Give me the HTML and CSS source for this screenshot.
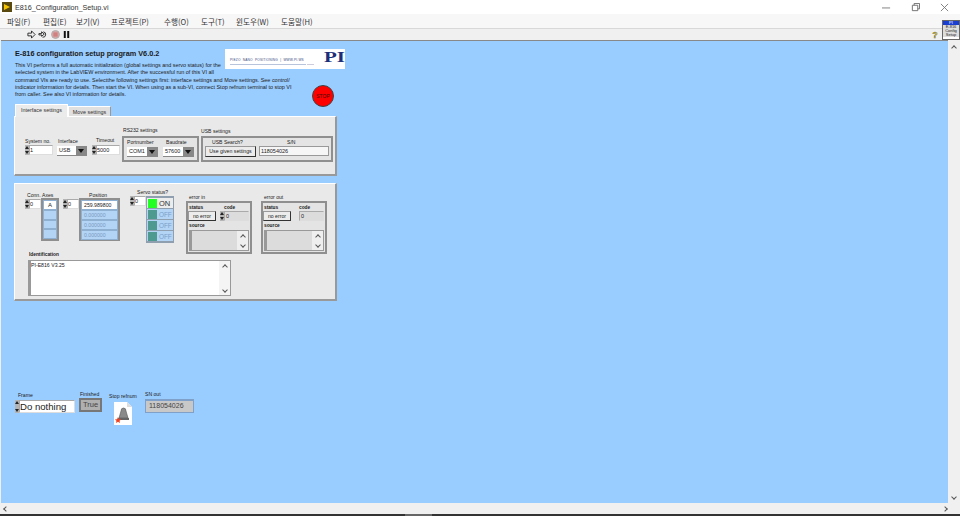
FILE: index.html

```html
<!DOCTYPE html>
<html lang="ko">
<head>
  <meta charset="UTF-8">
  <title>E816_Configuration_Setup.vi</title>
  <meta name="viewport" content="width=device-width, initial-scale=1.0">
  <link rel="stylesheet" href="styles.css">
</head>
<body>
  <div class="window">
    <div class="titlebar">
      <svg class="app-icon" viewBox="0 0 10 10"><rect width="10" height="10" fill="#5a4a10"/><path d="M2 2 L8 5 L2 8 Z" fill="#f5c400"/></svg>
      <span class="title">E816_Configuration_Setup.vi</span>
      <div class="win-btns">
        <svg viewBox="0 0 10 10"><path d="M0 5.5 H9" stroke="#777" fill="none"/></svg>
        <svg viewBox="0 0 10 10"><path d="M1.5 2.5 H7.5 V8.5 H1.5 Z M3.5 2.5 V0.5 H9.5 V6.5 H7.5" stroke="#666" fill="none"/></svg>
        <svg viewBox="0 0 10 10"><path d="M1 1 L9 9 M9 1 L1 9" stroke="#777" fill="none"/></svg>
      </div>
    </div>
    <div class="menubar">
      <span class="m1">파일(F)</span>
      <span class="m2">편집(E)</span>
      <span class="m3">보기(V)</span>
      <span class="m4">프로젝트(P)</span>
      <span class="m5">수행(O)</span>
      <span class="m6">도구(T)</span>
      <span class="m7">윈도우(W)</span>
      <span class="m8">도움말(H)</span>
    </div>
    <div class="toolbar">
      <svg class="tool" viewBox="0 0 10 10"><path d="M1 3.5 H5 V1 L9 5 L5 9 V6.5 H1 Z" fill="#eee" stroke="#222"/></svg>
      <svg class="tool" viewBox="0 0 10 10"><path d="M1 4 H4 V2 L7 4.5 L4 7 V5.5 H1 Z M6 2 A3 3 0 1 1 5 8" fill="none" stroke="#222"/></svg>
      <svg class="tool tool-wide" viewBox="0 0 10 10"><circle cx="5" cy="5" r="4.4" fill="#d9a8a8" stroke="#aaa"/><rect x="2.6" y="2.6" width="4.8" height="4.8" fill="#d08080"/></svg>
      <svg class="tool" viewBox="0 0 10 10"><path d="M2 1 H4.2 V9 H2 Z M5.8 1 H8 V9 H5.8 Z" fill="#111"/></svg>
      <svg class="help" viewBox="0 0 10 12"><text x="5" y="10.5" text-anchor="middle" class="help-mark">?</text></svg>
    </div>
    <div class="vi-icon">
      <div class="vi-top">PI</div>
      <div class="vi-text">E-816<br>Config<br>Setup</div>
    </div>

    <div class="middle">
      <div class="canvas">
        <h1 class="heading">E-816 configuration setup program V6.0.2</h1>
        <p class="descr">This VI performs a full automatic initialization (global settings and servo status) for the<br>selected system in the LabVIEW environment. After the successful run of this VI all<br>command VIs are ready to use. Selectthe following settings first: interface settings and Move settings. See control/<br>indicator information for details. Then start the VI. When using as a sub-VI, connect Stop refnum terminal to stop VI<br>from caller.  See also VI information for details.</p>

        <div class="logo">
          <span class="logo-line">PIEZO &nbsp;NANO &nbsp;POSITIONING &nbsp;| &nbsp;WWW.PI.WS</span>
          <span class="logo-rule"></span>
          <span class="logo-cross"></span>
          <span class="logo-pi">PI</span>
        </div>
        <div class="stop-btn">STOP</div>

        <div class="tab tab-on">Interface settings</div>
        <div class="tab tab-off">Move settings</div>

        <div class="panel panel-tabs">
          <span class="lbl l-sys">System no.</span>
          <div class="num n-sys"><i class="spin"></i><span class="field">1</span></div>
          <span class="lbl l-if">Interface</span>
          <div class="ring r-if"><span>USB</span><b></b></div>
          <span class="lbl l-time">Timeout</span>
          <div class="num n-time"><i class="spin"></i><span class="field">5000</span></div>

          <span class="lbl l-rs">RS232 settings</span>
          <div class="cluster c-rs">
            <span class="lbl l-port">Portnumber</span>
            <span class="lbl l-baud">Baudrate</span>
            <div class="ring r-port"><span>COM1</span><b></b></div>
            <div class="ring r-baud"><span>57600</span><b></b></div>
          </div>

          <span class="lbl l-usb">USB settings</span>
          <div class="cluster c-usb">
            <span class="lbl l-search">USB Search?</span>
            <span class="lbl l-sn">S/N</span>
            <div class="btn b-given">Use given settings</div>
            <div class="sn-field">118054026</div>
          </div>
        </div>

        <div class="panel panel-status">
          <span class="lbl l-conn">Conn.</span>
          <span class="lbl l-axes">Axes</span>
          <div class="num n-axes"><i class="spin"></i><span class="field">0</span></div>
          <div class="arr a-axes">
            <span class="cell on">A</span>
            <span class="cell"></span>
            <span class="cell"></span>
            <span class="cell"></span>
          </div>

          <span class="lbl l-pos">Position</span>
          <div class="num n-pos"><i class="spin"></i><span class="field">0</span></div>
          <div class="arr a-pos">
            <span class="cell on">259.989800</span>
            <span class="cell">0.000000</span>
            <span class="cell">0.000000</span>
            <span class="cell">0.000000</span>
          </div>

          <span class="lbl l-servo">Servo status?</span>
          <div class="num n-servo"><i class="spin"></i><span class="field">0</span></div>
          <div class="leds">
            <div class="led-row"><i class="led lit"></i><span class="led-on">ON</span></div>
            <div class="led-row"><i class="led"></i><span>OFF</span></div>
            <div class="led-row"><i class="led"></i><span>OFF</span></div>
            <div class="led-row"><i class="led"></i><span>OFF</span></div>
          </div>

          <span class="lbl l-err-in">error in</span>
          <div class="cluster err err-in">
            <span class="lbl e-status">status</span>
            <span class="lbl e-code">code</span>
            <div class="btn e-btn">no error</div>
            <div class="num e-num"><i class="spin"></i><span class="field grey">0</span></div>
            <span class="lbl e-source">source</span>
            <div class="src"><span class="bar"><i class="chev up"></i><i class="chev down"></i></span></div>
          </div>

          <span class="lbl l-err-out">error out</span>
          <div class="cluster err err-out">
            <span class="lbl e-status">status</span>
            <span class="lbl e-code">code</span>
            <div class="btn e-btn">no error</div>
            <div class="num e-num e-ind"><span class="field grey">0</span></div>
            <span class="lbl e-source">source</span>
            <div class="src"><span class="bar"><i class="chev up"></i><i class="chev down"></i></span></div>
          </div>

          <span class="lbl l-id">Identification</span>
          <div class="id-box">
            <span class="id-text">PI-E816 V3.25</span>
            <span class="bar bar-white"><i class="chev up"></i><i class="chev down"></i></span>
          </div>
        </div>

        <span class="lbl l-frame">Frame</span>
        <div class="num n-frame"><i class="spin"></i><span class="field">Do nothing</span></div>
        <span class="lbl l-fin">Finished</span>
        <div class="fin">True</div>
        <span class="lbl l-ref">Stop refnum</span>
        <svg class="ref-icon" viewBox="0 0 18 23">
          <path d="M0 0 H13 L18 5 V23 H0 Z" fill="#fff"/>
          <path d="M13 0 V5 H18" fill="#ddd"/>
          <path d="M7 9 Q7 6 9.5 6 Q12 6 12 9 L14 16 H5 Z" fill="#8a8a8a" stroke="#555" stroke-width=".6"/>
          <rect x="4" y="16" width="11" height="2" fill="#666"/>
          <path d="M4 15 L5 17.2 L7.2 17.4 L5.5 18.8 L6.1 21 L4 19.8 L1.9 21 L2.5 18.8 L.8 17.4 L3 17.2 Z" fill="#f04020"/>
        </svg>
        <span class="lbl l-snout">SN out</span>
        <div class="sn-out">118054026</div>
      </div>
      <div class="vscroll">
        <i class="chev up"></i>
        <i class="chev down"></i>
      </div>
    </div>

    <div class="hscroll">
      <i class="chev left"></i>
      <i class="chev right"></i>
    </div>
    <div class="taskline"><span></span></div>
  </div>
</body>
</html>
```

FILE: styles.css

```css
* { box-sizing: border-box; }
html, body { margin: 0; padding: 0; }
body { font-family: "Liberation Sans", Arial, sans-serif; background: #f0f0f0; color: #222; }
.window { width: 960px; height: 516px; position: relative; display: flex; flex-direction: column; overflow: hidden; }

/* window chrome */
.titlebar { height: 14px; background: #fff; display: flex; align-items: center; padding-left: 2px; flex: none; }
.app-icon { width: 10px; height: 10px; }
.title { margin-left: 3px; font-size: 7.2px; color: #333; }
.win-btns { margin-left: auto; display: flex; gap: 20px; padding-right: 11px; }
.win-btns svg { width: 9px; height: 9px; }
.menubar { height: 15px; background: #f7f7f7; position: relative; font-family: "Noto Sans CJK KR", "Liberation Sans", sans-serif; font-size: 7.6px; color: #333; flex: none; border-bottom: 1px solid #d8d8d8; }
.menubar span { position: absolute; top: 1px; line-height: 13px; white-space: nowrap; }
.m1 { left: 7px; } .m2 { left: 43px; } .m3 { left: 76px; } .m4 { left: 111px; }
.m5 { left: 164px; } .m6 { left: 201px; } .m7 { left: 236px; } .m8 { left: 281px; }
.toolbar { height: 11px; background: #f0f0f0; display: flex; align-items: center; padding-left: 27px; gap: 2px; flex: none; position: relative; }
.tool { width: 9px; height: 9px; }
.tool-wide { margin-left: 2px; }
.help { position: absolute; left: 931px; top: 0; width: 8px; height: 11px; }
.help-mark { font: bold 11px "Liberation Sans", sans-serif; fill: #e8c800; stroke: #555; stroke-width: .4; }
.vi-icon { position: absolute; left: 942px; top: 20px; width: 18px; height: 20px; border: 1px solid #666; background: #fff; font-size: 4px; line-height: 4px; text-align: center; color: #222; overflow: hidden; }
.vi-top { background: #1a3fd0; color: #fff; height: 4px; }
.vi-text { background: #ddd; }

/* chevrons for the scrollbars */
.chev { display: block; width: 4px; height: 4px; flex: none; border-top: 1px solid #555; border-left: 1px solid #555; }
.chev.up { transform: rotate(45deg); }
.chev.down { transform: rotate(225deg); }
.chev.left { transform: rotate(-45deg); }
.chev.right { transform: rotate(135deg); }

/* front panel canvas */
.middle { flex: 1; display: flex; min-height: 0; }
.canvas { flex: 1; position: relative; background: #99ccff; margin-left: 1px; border-top: 1px solid #888; overflow: hidden; }
.vscroll { width: 12px; background: #f0f0f0; display: flex; flex-direction: column; justify-content: space-between; align-items: center; padding: 6px 0 4px; }
.hscroll { height: 11px; background: #f0f0f0; display: flex; justify-content: space-between; align-items: center; padding: 0 13px 0 4px; flex: none; }
.taskline { height: 2px; background: #333; flex: none; padding-left: 405px; }
.taskline span { display: block; width: 27px; height: 2px; background: #666; }

/* canvas items keep their LabVIEW coordinates (top is y - 41) */
.heading { position: absolute; left: 14px; top: 8px; margin: 0; font-size: 7.3px; line-height: 9px; font-weight: bold; color: #1a1a1a; white-space: nowrap; }
.descr { position: absolute; left: 14px; top: 21px; margin: 0; font-size: 5.45px; line-height: 7.3px; color: #222; white-space: nowrap; }
.logo { position: absolute; left: 224px; top: 8px; width: 120px; height: 20px; background: #fff; }
.logo-line { position: absolute; left: 5px; top: 9px; font-size: 3.2px; line-height: 4px; letter-spacing: .2px; color: #3a4a80; white-space: nowrap; }
.logo-rule { position: absolute; left: 5px; top: 15px; width: 76px; height: 1px; background: #b8c4dc; }
.logo-cross { position: absolute; left: 82px; top: 15px; width: 7px; height: 1px; background: #ccd; }
.logo-pi { position: absolute; right: 0; top: 1px; font: bold 15px/15px "Liberation Serif", serif; color: #1c2f78; transform: scaleX(1.4); transform-origin: right; }
.stop-btn { position: absolute; left: 311px; top: 44px; width: 22px; height: 22px; border-radius: 50%; background: #f00; border: 1px solid #444; font-size: 5px; line-height: 20px; text-align: center; color: #400; }

.tab { position: absolute; font-size: 5.4px; color: #333; text-align: center; white-space: nowrap; }
.tab-on { left: 14px; top: 63px; width: 53px; height: 13px; line-height: 11px; background: #ebebeb; border: 1px solid #fff; border-bottom: none; z-index: 1; }
.tab-off { left: 67px; top: 65px; width: 43px; height: 11px; line-height: 10px; background: #e0e0e0; border: 1px solid #fff; border-right-color: #999; border-bottom: none; }
.panel { position: absolute; left: 13px; width: 323px; background: #e9e9e9; border: 1px solid #fff; border-right: 2px solid #999; border-bottom: 2px solid #999; }
.panel-tabs { top: 75px; height: 60px; }
.panel-status { top: 142px; height: 118px; }

.lbl { position: absolute; font-size: 5.1px; line-height: 6px; color: #222; white-space: nowrap; }
.num { position: absolute; display: flex; height: 10px; }
.spin { width: 4px; flex: none; background: #b4b4b4; position: relative; }
.spin::before, .spin::after { content: ""; position: absolute; left: 0; border-left: 2px solid transparent; border-right: 2px solid transparent; }
.spin::before { top: 1px; border-bottom: 3px solid #222; }
.spin::after { bottom: 1px; border-top: 3px solid #222; }
.field { flex: 1; background: #fff; border: 1px solid #aaa; border-right-color: #ddd; border-bottom-color: #ddd; font-size: 5.5px; line-height: 8px; white-space: nowrap; overflow: hidden; }
.field.grey { background: #dcdcdc; padding-left: 1px; }
.ring { position: absolute; height: 10px; display: flex; background: #fff; border-bottom: 1px solid #888; font-size: 5.5px; line-height: 9px; }
.ring span { flex: 1; padding-left: 2px; }
.ring b { width: 11px; background: #888; position: relative; }
.ring b::after { content: ""; position: absolute; left: 2px; top: 3px; border: 3.5px solid transparent; border-top: 4px solid #111; border-bottom: none; }
.cluster { position: absolute; border: 2px solid #8f8f8f; background: #e4e4e4; }
.btn { position: absolute; background: #ececec; border: 1px solid #333; border-top-color: #999; border-left-color: #999; font-size: 5.2px; line-height: 8px; text-align: center; white-space: nowrap; }

/* Interface settings tab: offsets from the panel corner (15, 117) */
.l-sys { left: 10px; top: 21px; }
.n-sys { left: 10px; top: 28px; width: 28px; }
.l-if { left: 43px; top: 21px; }
.r-if { left: 42px; top: 29px; width: 30px; }
.l-time { left: 81px; top: 20px; }
.n-time { left: 77px; top: 28px; width: 28px; }
.l-rs { left: 108px; top: 10px; }
.c-rs { left: 107px; top: 19px; width: 77px; height: 26px; }
.l-port { left: 3px; top: 1px; }
.l-baud { left: 42px; top: 1px; }
.r-port { left: 3px; top: 9px; width: 31px; }
.r-baud { left: 39px; top: 9px; width: 31px; }
.l-usb { left: 186px; top: 11px; }
.c-usb { left: 186px; top: 19px; width: 132px; height: 26px; }
.l-search { left: 9px; top: 1px; }
.l-sn { left: 84px; top: 1px; }
.b-given { left: 2px; top: 8px; width: 51px; height: 11px; line-height: 9px; }
.sn-field { position: absolute; left: 56px; top: 8px; width: 70px; height: 10px; background: #f6f6f6; border: 1px solid #999; font-size: 5.5px; line-height: 8px; padding-left: 1px; }

/* status panel: offsets from the panel corner (15, 184) */
.l-conn { left: 12px; top: 8px; }
.l-axes { left: 27px; top: 8px; }
.n-axes { left: 10px; top: 15px; width: 16px; }
.arr { position: absolute; background: #8f8f8f; padding: 2px; display: flex; flex-direction: column; gap: 0; height: 43px; }
.a-axes { left: 26px; top: 14px; width: 18px; }
.a-pos { left: 64px; top: 14px; width: 41px; }
.n-pos { left: 48px; top: 15px; width: 16px; }
.cell { height: 10px; background: #b3d4f5; border: 1px solid #8fb0d0; font-size: 5.2px; line-height: 8px; padding-left: 2px; color: #7a9abf; white-space: nowrap; }
.cell.on { background: #fff; color: #222; }
.a-axes .cell { padding-left: 4px; font-size: 6px; }
.l-pos { left: 74px; top: 8px; }
.l-servo { left: 122px; top: 5px; }
.n-servo { left: 115px; top: 12px; width: 16px; }
.leds { position: absolute; left: 131px; top: 12px; width: 28px; height: 47px; background: #8f9fb0; padding: 2px 1px; display: flex; flex-direction: column; gap: 1px; }
.led-row { flex: 1; display: flex; align-items: center; background: #b3d4f5; font-size: 6.4px; color: #7a9fc8; gap: 2px; padding-left: 1px; }
.led { width: 9px; height: 9px; background: #4f9a90; flex: none; }
.led.lit { background: #22ff22; }
.led-row:first-child { background: #ececec; }
.led-on { color: #333; font-size: 7.5px; }

.l-err-in { left: 174px; top: 10px; }
.l-err-out { left: 249px; top: 10px; }
.err { top: 17px; width: 66px; height: 53px; }
.err-in { left: 171px; }
.err-out { left: 246px; }
.e-status { left: 1px; top: 2px; font-weight: bold; font-size: 4.8px; }
.e-code { left: 36px; top: 2px; font-weight: bold; font-size: 4.8px; }
.e-btn { left: 0; top: 8px; width: 28px; height: 10px; }
.e-num { left: 32px; top: 8px; width: 29px; }
.e-ind { padding-left: 4px; }
.e-source { left: 1px; top: 20px; font-weight: bold; font-size: 4.8px; }
.src { position: absolute; left: 1px; top: 27px; width: 60px; height: 21px; background: #dcdcdc; border: 1px solid #999; border-left-width: 3px; display: flex; justify-content: flex-end; }
.bar { width: 11px; background: #efefef; display: flex; flex-direction: column; justify-content: space-between; align-items: center; padding: 4px 0 3px; }
.bar-white { background: #f4f4f4; }
.l-id { left: 14px; top: 68px; font-weight: bold; font-size: 4.8px; }
.id-box { position: absolute; left: 13px; top: 76px; width: 203px; height: 36px; background: #fff; border: 1px solid #999; border-left-width: 3px; display: flex; justify-content: space-between; }
.id-text { font-size: 5.2px; line-height: 8px; }

.l-frame { left: 17px; top: 351px; }
.n-frame { left: 14px; top: 359px; width: 60px; height: 13px; }
.n-frame .field { font-size: 9.6px; line-height: 11px; }
.l-fin { left: 79px; top: 350px; }
.fin { position: absolute; left: 78px; top: 357px; width: 23px; height: 14px; background: #b0b0b0; border: 2px solid #777; font-size: 7.5px; line-height: 10px; text-align: center; color: #444; }
.l-ref { left: 108px; top: 352px; }
.ref-icon { position: absolute; left: 113px; top: 361px; width: 18px; height: 23px; }
.l-snout { left: 144px; top: 350px; }
.sn-out { position: absolute; left: 144px; top: 358px; width: 49px; height: 14px; background: #c8c8c8; border: 1px solid #7fa0c8; border-top-width: 2px; font-size: 7px; line-height: 10px; padding-left: 3px; color: #444; }
```
